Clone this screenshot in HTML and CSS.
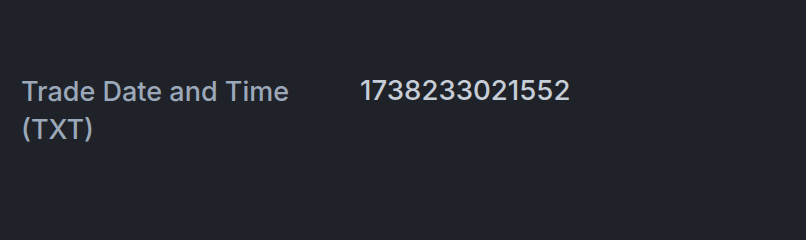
FILE: index.html
```html
<!DOCTYPE html>
<html lang="en">
<head>
<meta charset="utf-8">
<title>Trade detail</title>
<link rel="stylesheet" href="styles.css">
</head>
<body>
<main class="panel">
  <dl class="field">
    <dt class="field-label">Trade Date and Time (TXT)</dt>
    <dd class="field-value">1738233021552</dd>
  </dl>
</main>
</body>
</html>
```

FILE: styles.css
```css
html, body {
  margin: 0;
  padding: 0;
  background: #1f2228;
  width: 806px;
  height: 202px;
  overflow: hidden;
}
.panel {
  padding: 73px 0 0 21px;
  font-family: Inter, "Noto Sans", "Liberation Sans", sans-serif;
}
.field {
  display: grid;
  grid-template-columns: 300px 1fr;
  column-gap: 39px;
  margin: 0;
}
.field-label {
  margin: 0;
  font-size: 27px;
  font-weight: 500;
  line-height: 38px;
  color: #9ba8b9;
}
.field-value {
  margin: 0;
  font-size: 27.6px;
  font-weight: 500;
  line-height: 34px;
  color: #c6cdd7;
}
```
